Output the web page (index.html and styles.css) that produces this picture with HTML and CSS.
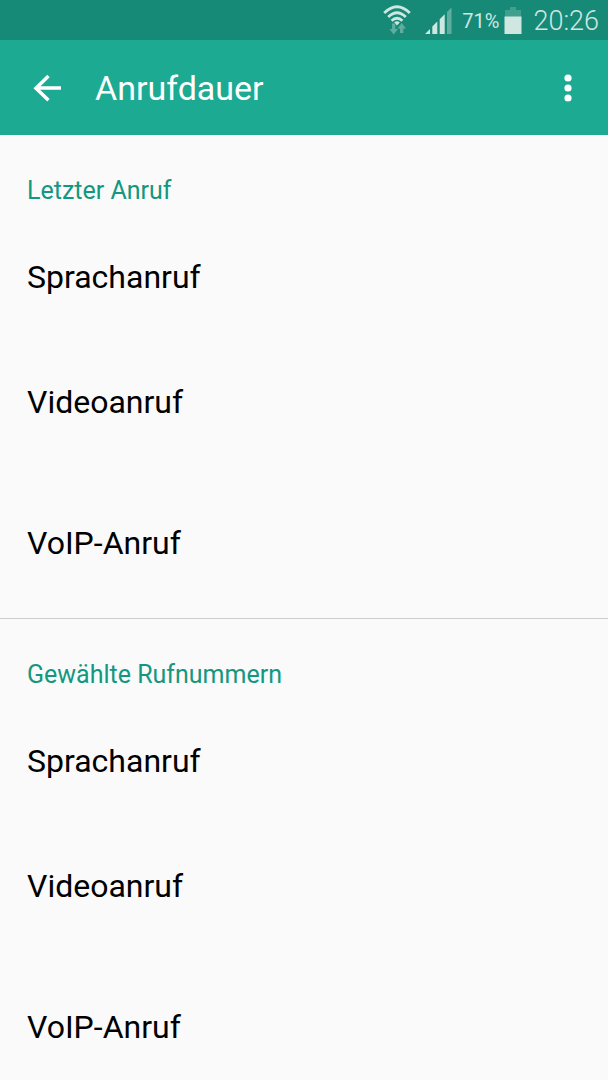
FILE: index.html
```html
<!DOCTYPE html>
<html lang="de">
<head>
<meta charset="utf-8">
<meta name="viewport" content="width=device-width, initial-scale=1">
<title>Anrufdauer</title>
<link rel="stylesheet" href="styles.css">
</head>
<body>
<div class="status">
  <svg class="wifi" width="28" height="32" viewBox="0 0 28 32" aria-hidden="true">
    <g fill="none" stroke="#cfe6e1" stroke-width="2.800"><path d="M1.200 8Q14-4.500 26.800 8"/><path d="M5.200 12Q14 3.500 22.800 12"/><path d="M8.600 15.800Q14 10.500 19.400 15.800"/></g>
    <path fill="#cfe6e1" d="M11.200 17.400Q14 15 16.800 17.400L14 20.500z"/>
    <path fill="#5fada0" d="M9 18.500h3.300V24H15l-4.300 5.500L6.500 24H9zM17 28v-4.500h-2.500l4.200-5.500 4.300 5.500h-2.700V28z"/>
  </svg>
  <svg class="signal" width="27" height="28" viewBox="0 0 27 28" aria-hidden="true">
    <path fill="#cfe6e1" d="M0 27l5-5v5zM7.300 27v-7.500l5-5V27zM14.700 27V12.200l5-5V27z"/><path fill="#5fada0" d="M22 27V4.900L26.500 .4V27z"/>
  </svg>
  <span class="percent">71%</span>
  <svg class="battery" width="18" height="28" viewBox="0 0 18 28" aria-hidden="true"><path fill="#3fa08f" d="M6 0h6v3h5v7H1V3h5z"/><path fill="#cfe6e1" d="M.5 9.500h17V27H.5z"/></svg>
  <time class="clock">20:26</time>
</div>
<header class="bar">
  <button class="icon-button" aria-label="Zurück"><svg width="28" height="28" viewBox="0 0 28 28"><path d="M28 14H3M15.500 2 3 14.200l12.500 12" fill="none" stroke="#fff" stroke-width="3.500"/></svg></button>
  <h1 class="title">Anrufdauer</h1>
  <button class="icon-button" aria-label="Weitere Optionen"><svg width="8" height="28" viewBox="0 0 8 28" fill="#fff"><circle cx="4" cy="4" r="3.600"/><circle cx="4" cy="14" r="3.600"/><circle cx="4" cy="24" r="3.600"/></svg></button>
</header>
<main>
  <section class="group">
    <h2 class="heading">Letzter Anruf</h2>
    <ul class="list"><li class="item">Sprachanruf</li><li class="item">Videoanruf</li><li class="item">VoIP-Anruf</li></ul>
  </section>
  <section class="group">
    <h2 class="heading">Gewählte Rufnummern</h2>
    <ul class="list"><li class="item">Sprachanruf</li><li class="item">Videoanruf</li><li class="item">VoIP-Anruf</li></ul>
  </section>
</main>
</body>
</html>
```
FILE: styles.css
```css
* { box-sizing: border-box; }
body { margin: 0; background: #fafafa; color: #000; font-family: Roboto, sans-serif; }
.status { display: flex; align-items: center; justify-content: flex-end; height: 40px; padding: 2px 9px 0 0; background: #178a77; color: #cfe6e1; }
.signal { margin-left: 14px; }
.percent { margin: 0 5px 0 10px; font-size: 20px; line-height: 24px; }
.clock { margin-left: 11px; font-size: 27px; line-height: 32px; font-weight: 300; }
.bar { display: flex; align-items: center; height: 95px; padding: 1px 30px 0 27px; background: #1caa93; color: #fff; }
.icon-button { display: flex; padding: 6px; border: 0; background: none; }
.title { flex: 1; margin: 0 0 0 28px; font-size: 34px; line-height: 40px; font-weight: 400; }
.group { padding-bottom: 6px; border-bottom: 1px solid #ccc; }
.heading { margin: 0; padding: 41px 27px 0; font-size: 25px; line-height: 30px; font-weight: 400; color: #149780; }
.list { margin: 0; padding: 0; list-style: none; }
.item { min-height: 141px; padding: 52px 27px 0; font-size: 32px; line-height: 40px; }
.item:first-child { min-height: 124px; padding-top: 51px; }
```
